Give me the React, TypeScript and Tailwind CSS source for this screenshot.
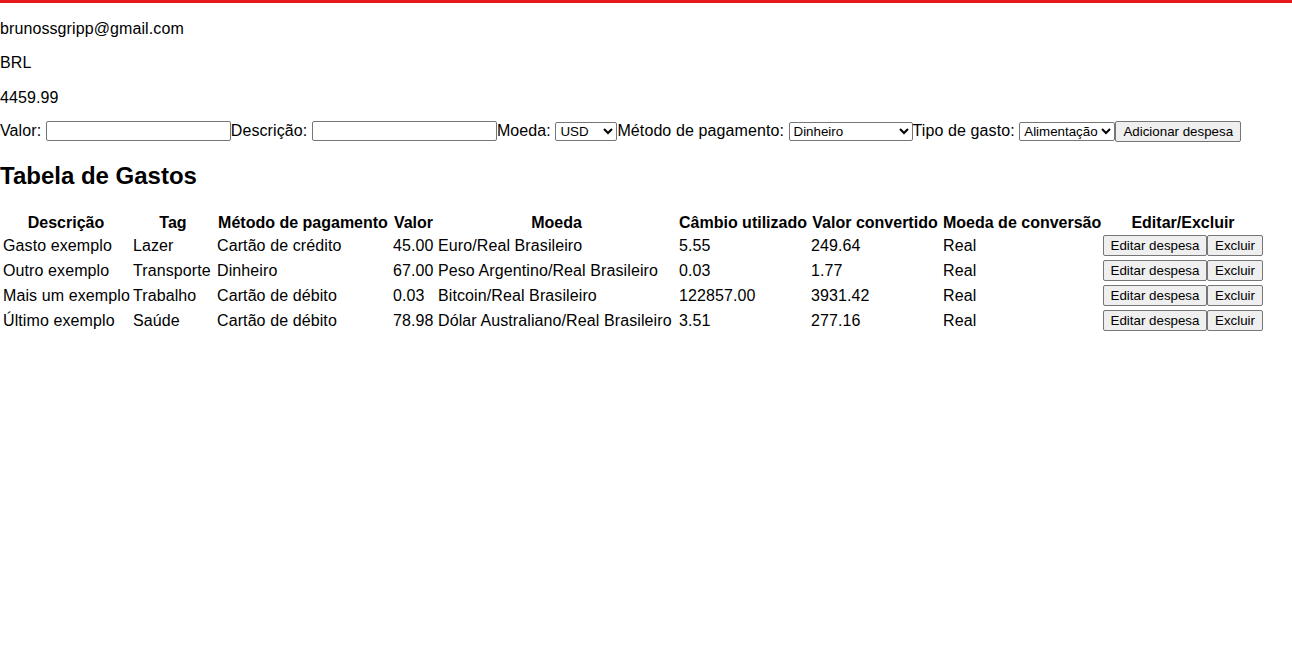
const expenses = [
  { desc: 'Gasto exemplo', tag: 'Lazer', method: 'Cartão de crédito', value: '45.00', currency: 'Euro/Real Brasileiro', rate: '5.55', converted: '249.64' },
  { desc: 'Outro exemplo', tag: 'Transporte', method: 'Dinheiro', value: '67.00', currency: 'Peso Argentino/Real Brasileiro', rate: '0.03', converted: '1.77' },
  { desc: 'Mais um exemplo', tag: 'Trabalho', method: 'Cartão de débito', value: '0.03', currency: 'Bitcoin/Real Brasileiro', rate: '122857.00', converted: '3931.42' },
  { desc: 'Último exemplo', tag: 'Saúde', method: 'Cartão de débito', value: '78.98', currency: 'Dólar Australiano/Real Brasileiro', rate: '3.51', converted: '277.16' },
];

const headers = [
  ['Descrição', 'w-[128px]'],
  ['Tag', 'w-[82px]'],
  ['Método de pagamento', 'w-[174px]'],
  ['Valor', 'w-[43px]'],
  ['Moeda', 'w-[239px]'],
  ['Câmbio utilizado', 'w-[130px]'],
  ['Valor convertido', 'w-[130px]'],
  ['Moeda de conversão', 'w-[158px]'],
  ['Editar/Excluir', 'w-[162px]'],
];

const field = "font-['Liberation_Sans',Arial,sans-serif] text-[13.33px] tracking-normal bg-white border border-[#767676] rounded-[2px]";
const btn = "font-['Liberation_Sans',Arial,sans-serif] text-[13.33px] tracking-normal bg-[#efefef] border border-[#767676] rounded-[2px] px-[6px] h-[21px] leading-[19px] text-black";

export default function App() {
  return (
    <div className="min-h-[671px] bg-white text-black border-t-[3px] border-[#e3191c] font-['Liberation_Sans',Arial,sans-serif] text-[16px] leading-[18.4px] tracking-[0.1px]">
      <header>
        <p className="mt-[17px] mb-4">brunossgripp@gmail.com</p>
        <p className="my-4">BRL</p>
        <p className="mt-[15px] mb-[13px]">4459.99</p>
      </header>

      <form className="flex items-center h-[21px] whitespace-nowrap">
        <label className="flex items-center">
          Valor:&nbsp;
          <input type="text" className={`${field} w-[185px] h-[20px] px-[2px] mt-[1px]`} />
        </label>
        <label className="flex items-center">
          Descrição:&nbsp;
          <input type="text" className={`${field} w-[185px] h-[20px] px-[2px] mt-[1px]`} />
        </label>
        <label className="flex items-center">
          Moeda:&nbsp;
          <select className={`${field} w-[62px] h-[19px] mt-[1px]`} defaultValue="USD">
            <option>USD</option>
          </select>
        </label>
        <label className="flex items-center">
          Método de pagamento:&nbsp;
          <select className={`${field} w-[124px] h-[19px] mt-[1px]`} defaultValue="Dinheiro">
            <option>Dinheiro</option>
          </select>
        </label>
        <label className="flex items-center">
          Tipo de gasto:&nbsp;
          <select className={`${field} w-[96px] h-[19px] mt-[1px]`} defaultValue="Alimentação">
            <option>Alimentação</option>
          </select>
        </label>
        <button type="button" className={`${btn} w-[126px] mt-[1px]`}>Adicionar despesa</button>
      </form>

      <h2 className="text-[24px] font-bold leading-[27.6px] tracking-normal mt-[21px] mb-[22px]">Tabela de Gastos</h2>

      <table className="table-fixed border-separate border-spacing-[2px] w-[1266px]">
        <thead>
          <tr>
            {headers.map(([h, w]) => (
              <th key={h} className={`${w} px-px py-0 text-center font-bold tracking-normal whitespace-nowrap`}>{h}</th>
            ))}
          </tr>
        </thead>
        <tbody>
          {expenses.map((e) => (
            <tr key={e.desc}>
              <td className="p-px whitespace-nowrap">{e.desc}</td>
              <td className="p-px whitespace-nowrap">{e.tag}</td>
              <td className="p-px whitespace-nowrap">{e.method}</td>
              <td className="p-px whitespace-nowrap">{e.value}</td>
              <td className="p-px whitespace-nowrap">{e.currency}</td>
              <td className="p-px whitespace-nowrap">{e.rate}</td>
              <td className="p-px whitespace-nowrap">{e.converted}</td>
              <td className="p-px whitespace-nowrap">Real</td>
              <td className="p-px whitespace-nowrap">
                <div className="flex">
                  <button type="button" className={`${btn} w-[104px]`}>Editar despesa</button>
                  <button type="button" className={`${btn} w-[56px]`}>Excluir</button>
                </div>
              </td>
            </tr>
          ))}
        </tbody>
      </table>
    </div>
  );
}
